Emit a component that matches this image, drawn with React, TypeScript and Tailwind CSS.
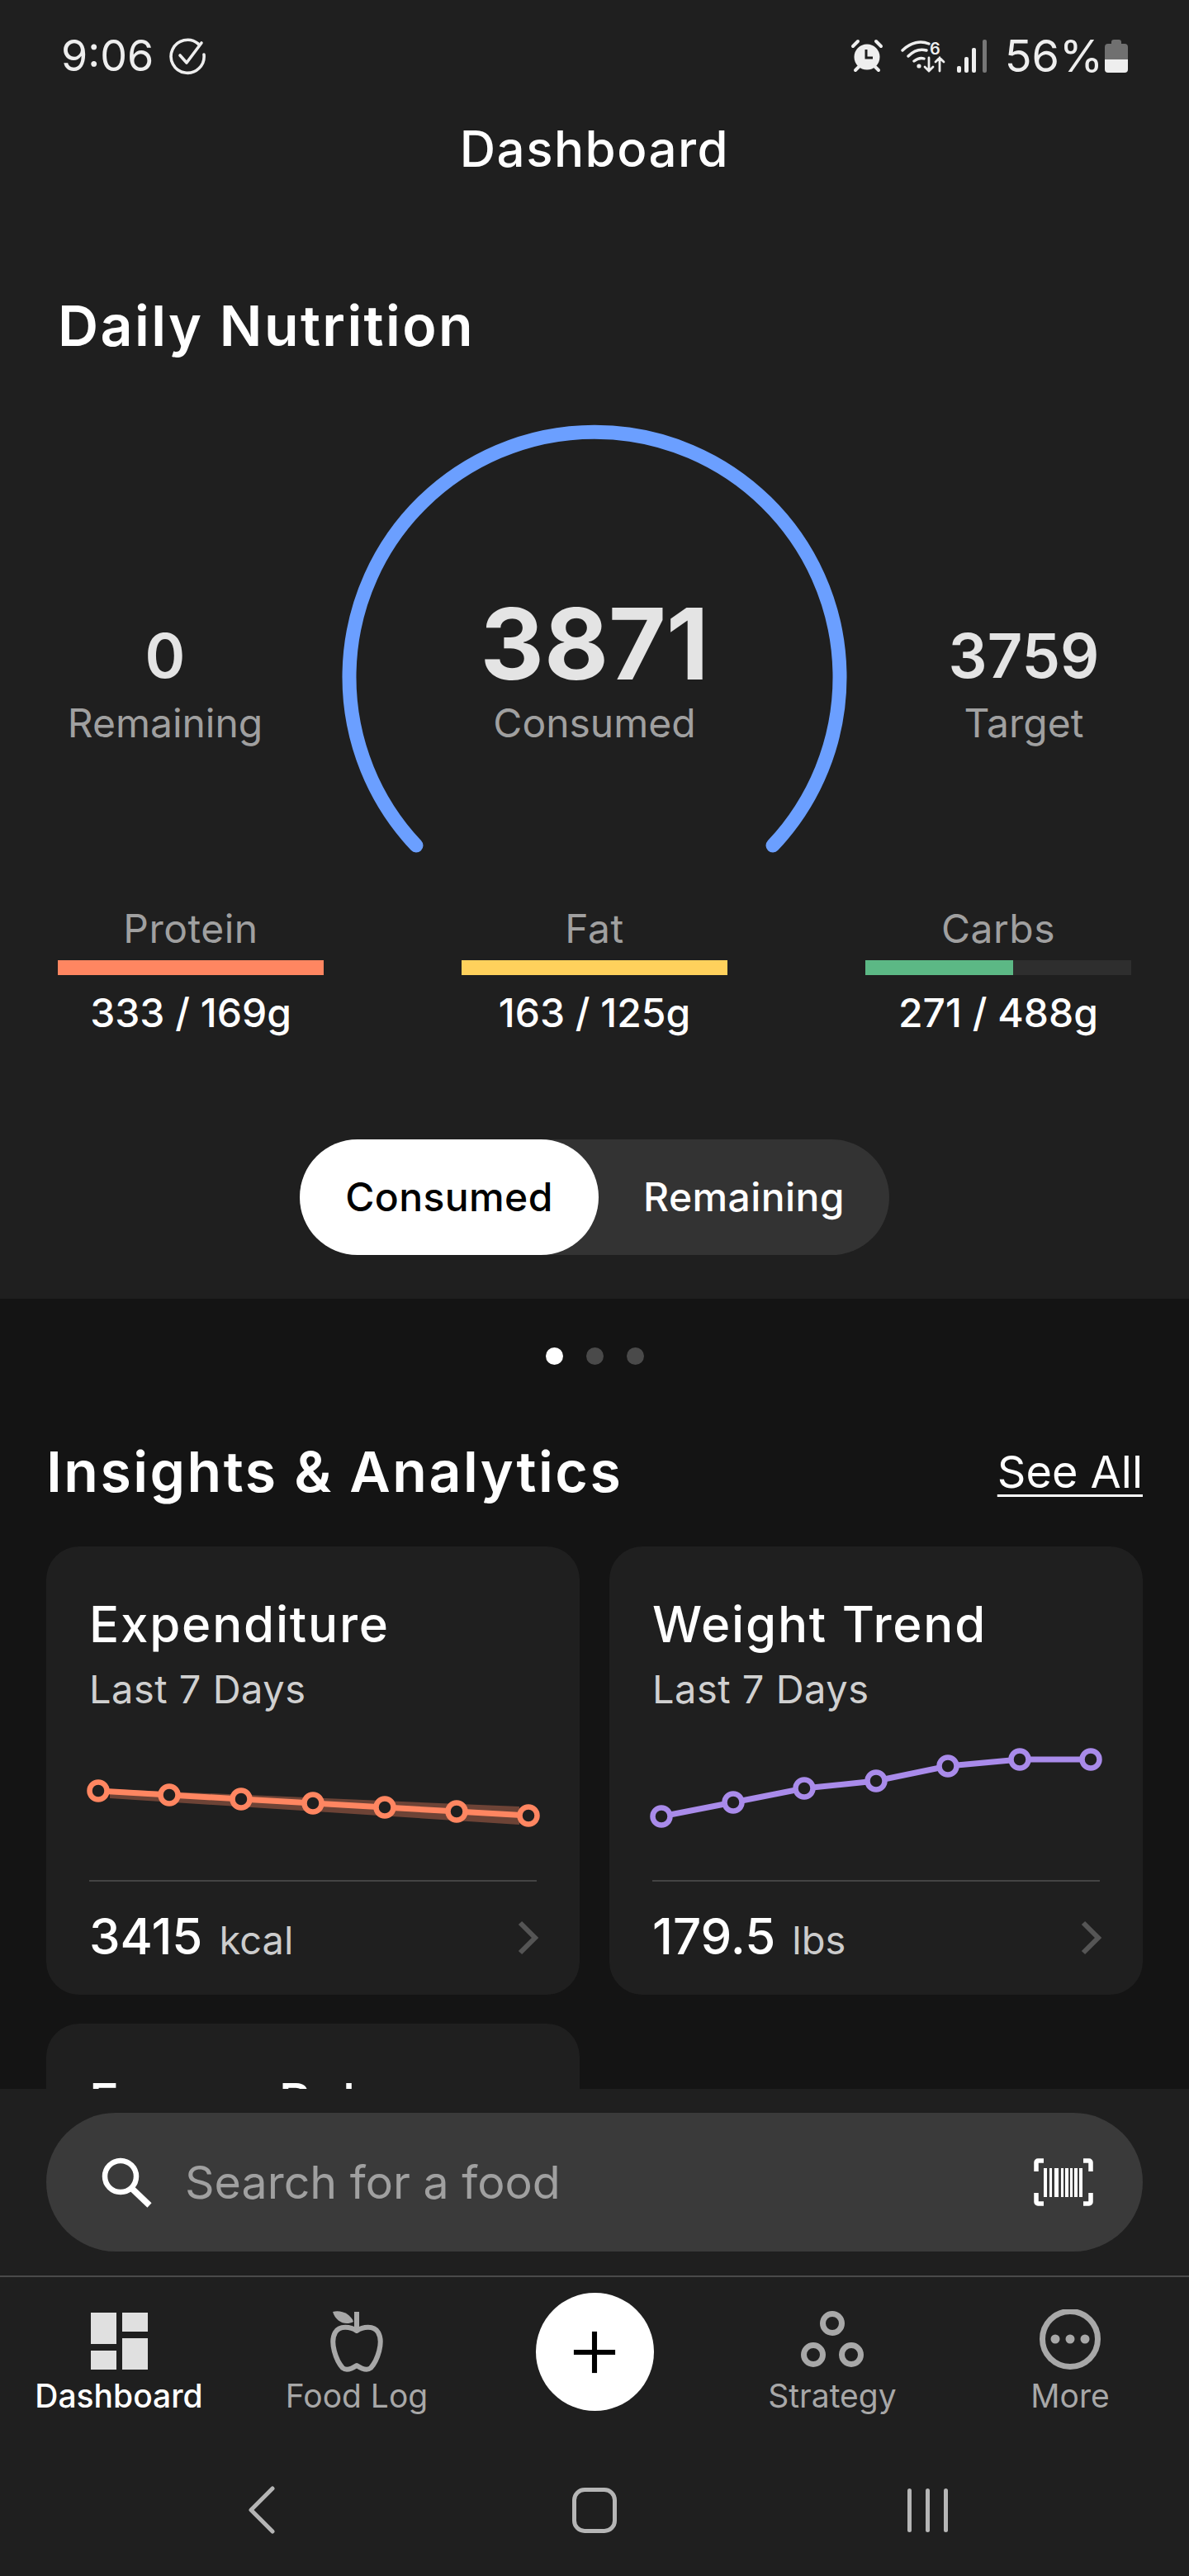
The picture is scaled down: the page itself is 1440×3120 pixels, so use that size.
import { ChevronRight, Plus } from "lucide-react";

const expenditure = [
  [11, 59],
  [97, 64],
  [184, 69],
  [271, 74],
  [358, 79],
  [445, 84],
  [532, 89],
];
const weight = [
  [11, 90],
  [98, 73],
  [184, 56],
  [271, 47],
  [358, 29],
  [445, 21],
  [531, 21],
];

function Spark({ pts, color, band }: { pts: number[][]; color: string; band?: boolean }) {
  return (
    <svg width="542" height="120" viewBox="0 0 542 120" className="mt-[34px] block overflow-visible">
      {band && <polygon points="25,57 521,78 521,100 25,68" fill={color} fillOpacity="0.35" />}
      <polyline points={pts.map((p) => p.join(",")).join(" ")} fill="none" stroke={color} strokeWidth="7" />
      {pts.map((p) => (
        <circle key={p[0]} cx={p[0]} cy={p[1]} r="10.5" fill="#1f1f1f" stroke={color} strokeWidth="6.5" />
      ))}
    </svg>
  );
}

function Card({
  title,
  pts,
  color,
  band,
  value,
  unit,
}: {
  title: string;
  pts: number[][];
  color: string;
  band?: boolean;
  value: string;
  unit: string;
}) {
  return (
    <div className="h-[543px] rounded-[40px] bg-[#1f1f1f] px-[52px] pt-[59px]">
      <div className="text-[60px] leading-[70px] font-medium tracking-[1.8px] text-white">{title}</div>
      <div className="mt-[14px] text-[47px] leading-[60px] tracking-[0.5px] text-[#d0d0d0]">Last 7 Days</div>
      <Spark pts={pts} color={color} band={band} />
      <div className="mt-[47px] h-[2px] bg-[#444444]" />
      <div className="mt-[33px] flex h-[70px] items-center justify-between">
        <div className="flex items-baseline gap-[20px]">
          <span className="text-[60px] leading-[70px] font-medium text-white">{value}</span>
          <span className="text-[47px] leading-[70px] text-[#cccccc]">{unit}</span>
        </div>
        <ChevronRight size={72} strokeWidth={2} className="mr-[-25px] text-[#555555]" strokeLinecap="butt" strokeLinejoin="miter" />
      </div>
    </div>
  );
}

function StatCol({ value, label }: { value: string; label: string }) {
  return (
    <div className="flex flex-col items-center pt-[249px]">
      <div className="text-[74px] leading-[90px] font-semibold text-[#e4e4e4]">{value}</div>
      <div className="mt-[7px] text-[48px] leading-[60px] text-[#a0a0a0]">{label}</div>
    </div>
  );
}

function Macro({ label, value, pct, color }: { label: string; value: string; pct: number; color: string }) {
  return (
    <div className="flex flex-col items-center">
      <div className="text-[48px] leading-[60px] tracking-[0.5px] text-[#a0a0a0]">{label}</div>
      <div className="mt-[8px] h-[18px] w-full bg-[#2e2e2e]">
        <div className="h-full" style={{ width: `${pct}%`, backgroundColor: color }} />
      </div>
      <div className="mt-[16px] text-[48px] leading-[60px] font-medium text-white">{value}</div>
    </div>
  );
}

function NavItem({ label, active, icon }: { label: string; active?: boolean; icon: React.ReactNode }) {
  return (
    <div className="flex flex-col items-center pt-[39px]">
      <div className="flex h-[76px] items-center justify-center">{icon}</div>
      <div className={`mt-[4px] text-[39px] leading-[50px] ${active ? "font-medium text-white" : "text-[#a8a8a8]"}`}>{label}</div>
    </div>
  );
}

function StatusIcons() {
  return (
    <div className="flex items-center">
      {/* alarm */}
      <svg width="40" height="42" viewBox="0 0 40 42" className="text-[#eeeeee]">
        <circle cx="20" cy="22" r="15.5" fill="currentColor" />
        <path d="M19 13v10h8" fill="none" stroke="#1f1f1f" strokeWidth="3" />
        <path d="M3 9 9 3M37 9 31 3M6 38l5-5M34 38l-5-5" stroke="currentColor" strokeWidth="4" strokeLinecap="round" />
      </svg>
      {/* wifi */}
      <svg width="54" height="42" viewBox="0 0 54 42" className="ml-[21px] text-[#eeeeee]">
        <path d="M2 14C12 4 24 2 34 6M9 21C16 14 24 12 31 14M16 27C20 24 25 23 28 24" fill="none" stroke="currentColor" strokeWidth="3.4" strokeLinecap="round" />
        <circle cx="22" cy="33" r="2.6" fill="currentColor" />
        <text x="35" y="19" fontSize="20" fontWeight="600" fill="currentColor">6</text>
        <path d="M34 23v16M29 34l5 5 5-5M47 39V23M42 28l5-5 5 5" fill="none" stroke="currentColor" strokeWidth="2.8" strokeLinecap="round" />
      </svg>
      {/* signal */}
      <svg width="36" height="40" viewBox="0 0 36 40" className="ml-[14px]">
        <rect x="0" y="32" width="5" height="8" rx="2" fill="#eeeeee" />
        <rect x="9" y="21" width="5" height="19" rx="2" fill="#eeeeee" />
        <rect x="18" y="10" width="5" height="30" rx="2" fill="#eeeeee" />
        <rect x="31" y="0" width="5" height="40" rx="2" fill="#777777" />
      </svg>
      <span className="ml-[22px] text-[54px] leading-[56px] text-[#eeeeee]">56%</span>
      {/* battery */}
      <svg width="28" height="40" viewBox="0 0 28 40" className="ml-[2px]">
        <path d="M8 3a3 3 0 0 1 3-3h6a3 3 0 0 1 3 3v2h4a4 4 0 0 1 4 4v15H0V9a4 4 0 0 1 4-4h4Z" fill="#707070" />
        <path d="M0 24h28v12a4 4 0 0 1-4 4H4a4 4 0 0 1-4-4Z" fill="#eeeeee" />
      </svg>
    </div>
  );
}

export default function App() {
  return (
    <div className="flex h-[3120px] w-[1440px] flex-col overflow-hidden bg-[#141414] font-['Inter',sans-serif]">
      {/* summary panel */}
      <div className="h-[1573px] shrink-0 bg-[#1f1f1f]">
        <div className="flex h-[56px] translate-y-[40px] items-center justify-between pr-[74px] pl-[74px]">
          <div className="flex items-center">
            <span className="text-[52px] leading-[56px] text-[#eeeeee]">9:06</span>
            <svg width="46" height="46" viewBox="0 0 46 46" className="ml-[18px] text-[#eeeeee]">
              <path d="M36 8A20 20 0 1 0 43 21" fill="none" stroke="currentColor" strokeWidth="3.6" strokeLinecap="round" />
              <path d="M14 22l8 9 18-24" fill="none" stroke="currentColor" strokeWidth="3.6" strokeLinecap="round" strokeLinejoin="round" />
            </svg>
          </div>
          <StatusIcons />
        </div>
        <div className="mt-[94px] text-center text-[60px] leading-[60px] font-medium tracking-[1.5px] text-white">Dashboard</div>
        <div className="mt-[144px] pl-[70px] text-[68px] leading-[80px] font-semibold tracking-[2.4px] text-white">Daily Nutrition</div>

        {/* gauge */}
        <div className="relative mt-[66px] grid h-[595px] grid-cols-[400px_640px_400px]">
          <StatCol value="0" label="Remaining" />
          <div className="relative flex flex-col items-center pt-[220px]">
            <svg width="640" height="560" viewBox="0 0 640 560" className="absolute top-0 left-0">
              <path d="M104 524A297 297 0 1 1 536 524" fill="none" stroke="#6b9fff" strokeWidth="17" strokeLinecap="round" />
            </svg>
            <div className="relative text-[120px] leading-[120px] font-bold text-[#e4e4e4]">3871</div>
            <div className="relative mt-[6px] text-[48px] leading-[60px] text-[#a0a0a0]">Consumed</div>
          </div>
          <StatCol value="3759" label="Target" />
        </div>

        {/* macros */}
        <div className="grid grid-cols-3 gap-[167px] px-[70px]">
          <Macro label="Protein" value="333 / 169g" pct={100} color="#ff8661" />
          <Macro label="Fat" value="163 / 125g" pct={100} color="#ffd15c" />
          <Macro label="Carbs" value="271 / 488g" pct={55.5} color="#5cb885" />
        </div>

        {/* toggle */}
        <div className="mx-auto mt-[123px] flex h-[140px] w-[714px] rounded-full bg-[#333333]">
          <div className="flex w-[362px] items-center justify-center rounded-full bg-white text-[48px] font-medium tracking-[0.4px] text-black">Consumed</div>
          <div className="flex flex-1 items-center justify-center text-[48px] font-medium tracking-[0.4px] text-white">Remaining</div>
        </div>
      </div>

      {/* insights */}
      <div className="h-[957px] shrink-0 overflow-hidden px-[56px]">
        <div className="mt-[59px] flex justify-center gap-[28px]">
          <div className="h-[21px] w-[21px] rounded-full bg-white" />
          <div className="h-[21px] w-[21px] rounded-full bg-[#4a4a4a]" />
          <div className="h-[21px] w-[21px] rounded-full bg-[#4a4a4a]" />
        </div>
        <div className="mt-[89px] flex h-[80px] items-center justify-between">
          <div className="text-[68px] font-semibold tracking-[2.5px] text-white">Insights &amp; Analytics</div>
          <div className="text-[54px] text-white underline decoration-[3px] underline-offset-[8px]">See All</div>
        </div>
        <div className="mt-[51px] grid grid-cols-2 gap-x-[36px] gap-y-[35px]">
          <Card title="Expenditure" pts={expenditure} color="#ff8661" band value="3415" unit="kcal" />
          <Card title="Weight Trend" pts={weight} color="#a98bea" value="179.5" unit="lbs" />
          <div className="h-[543px] rounded-[40px] bg-[#1f1f1f] px-[52px] pt-[59px]">
            <div className="text-[60px] leading-[70px] font-medium tracking-[1.8px] text-white">Energy Balance</div>
          </div>
        </div>
      </div>

      {/* bottom bar */}
      <div className="flex-1 bg-[#1f1f1f]">
        <div className="mx-[56px] mt-[29px] flex h-[168px] items-center justify-between rounded-full bg-[#3a3a3a] pr-[60px] pl-[66px]">
          <div className="flex items-center">
            <svg width="62" height="62" viewBox="0 0 62 62">
              <circle cx="24" cy="24" r="19" fill="none" stroke="white" strokeWidth="6.5" />
              <path d="M37 38 59 59" stroke="white" strokeWidth="7.5" />
            </svg>
            <span className="ml-[40px] text-[55.5px] text-[#a0a0a0]">Search for a food</span>
          </div>
          <svg width="72" height="58" viewBox="0 0 72 58">
            <path d="M12 3H5a2 2 0 0 0-2 2v11M60 3h7a2 2 0 0 1 2 2v11M12 55H5a2 2 0 0 1-2-2V42M60 55h7a2 2 0 0 0 2-2V42" fill="none" stroke="white" strokeWidth="5.5" />
            <path d="M12 12h4v35h-4zM19 12h3v35h-3zM25 12h5v35h-5zM33 12h3v35h-3zM38 12h4v35h-4zM44 12h3v35h-3zM49 12h4v35h-4zM55 12h4v35h-4z" fill="white" />
          </svg>
        </div>
        <div className="mt-[29px] h-[2px] bg-[#4a4a4a]" />
        <div className="grid h-[202px] grid-cols-5">
          <NavItem
            label="Dashboard"
            active
            icon={
              <svg width="69" height="69" viewBox="0 0 69 69" fill="#e0e0e0">
                <rect x="0" y="0" width="31" height="38" />
                <rect x="38" y="0" width="31" height="23" />
                <rect x="0" y="46" width="31" height="23" />
                <rect x="38" y="31" width="31" height="38" />
              </svg>
            }
          />
          <NavItem
            label="Food Log"
            icon={
              <svg width="66" height="76" viewBox="0 0 66 76">
                <path d="M4 3C14 0 26 6 29 15C20 20 8 16 4 3Z" fill="#a8a8a8" />
                <rect x="30" y="3" width="6" height="24" fill="#a8a8a8" />
                <path d="M33 26C26 21 12 19 7 28C0 40 8 62 16 71C21 75 27 72 33 68C39 72 45 75 50 71C58 62 66 40 59 28C54 19 40 21 33 26Z" fill="none" stroke="#a8a8a8" strokeWidth="6" strokeLinejoin="round" />
              </svg>
            }
          />
          <div className="flex justify-center pt-[19px]">
            <div className="flex h-[143px] w-[143px] items-center justify-center rounded-full bg-white">
              <Plus size={86} strokeWidth={1.7} className="text-black" strokeLinecap="butt" />
            </div>
          </div>
          <NavItem
            label="Strategy"
            icon={
              <svg width="76" height="76" viewBox="0 0 76 76" fill="none" stroke="#a8a8a8" strokeWidth="7">
                <circle cx="38" cy="17" r="11.5" />
                <circle cx="15" cy="55" r="11.5" />
                <circle cx="61" cy="55" r="11.5" />
              </svg>
            }
          />
          <NavItem
            label="More"
            icon={
              <svg width="76" height="76" viewBox="0 0 76 76">
                <circle cx="38" cy="36" r="33.5" fill="none" stroke="#a8a8a8" strokeWidth="7" />
                <circle cx="20" cy="36" r="5.5" fill="#a8a8a8" />
                <circle cx="38" cy="36" r="5.5" fill="#a8a8a8" />
                <circle cx="56" cy="36" r="5.5" fill="#a8a8a8" />
              </svg>
            }
          />
        </div>
        {/* android nav */}
        <div className="grid h-[160px] grid-cols-3 items-center justify-items-center px-[115px]">
          <svg width="32" height="58" viewBox="0 0 32 58" fill="none" stroke="#b5b5b5" strokeWidth="5" strokeLinecap="round" strokeLinejoin="round">
            <path d="M29 3 3 29l26 26" />
          </svg>
          <div className="h-[55px] w-[54px] rounded-[15px] border-[5px] border-[#b5b5b5]" />
          <div className="flex h-[53px] gap-[17px]">
            <div className="w-[5px] rounded-full bg-[#b5b5b5]" />
            <div className="w-[5px] rounded-full bg-[#b5b5b5]" />
            <div className="w-[5px] rounded-full bg-[#b5b5b5]" />
          </div>
        </div>
      </div>
    </div>
  );
}
